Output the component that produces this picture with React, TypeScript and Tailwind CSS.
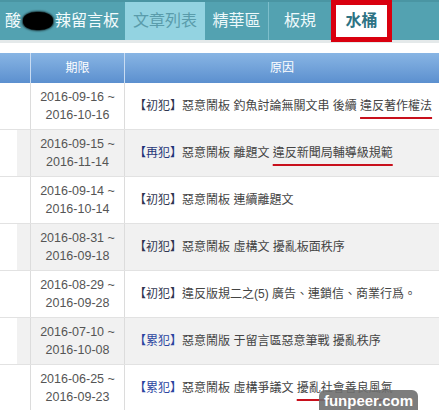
import React from "react";

type Row = {
  from: string;
  to: string;
  tag: "初犯" | "再犯" | "累犯";
  text: string;
  mark?: string;
  gray?: boolean;
};

const rows: Row[] = [
  { from: "2016-09-16", to: "2016-10-16", tag: "初犯", text: "惡意鬧板 釣魚討論無關文串 後續 ", mark: "違反著作權法" },
  { from: "2016-09-15", to: "2016-11-14", tag: "再犯", text: "惡意鬧板 離題文 ", mark: "違反新聞局輔導級規範", gray: true },
  { from: "2016-09-14", to: "2016-10-14", tag: "初犯", text: "惡意鬧板 連續離題文" },
  { from: "2016-08-31", to: "2016-09-18", tag: "初犯", text: "惡意鬧板 虛構文 擾亂板面秩序", gray: true },
  { from: "2016-08-29", to: "2016-09-28", tag: "初犯", text: "違反版規二之(5) 廣告、連鎖信、商業行爲。" },
  { from: "2016-07-10", to: "2016-10-08", tag: "累犯", text: "惡意鬧版 于留言區惡意筆戰 擾亂秩序", gray: true },
  { from: "2016-06-25", to: "2016-09-23", tag: "累犯", text: "惡意鬧板 虛構爭議文 ", mark: "擾亂社會善良風氣" },
];

const tagColor: Record<string, string> = {
  初犯: "text-[#2f3550]",
  再犯: "text-[#1f3478]",
  累犯: "text-[#2b45a0]",
};

export default function App() {
  return (
    <div
      className="relative w-[439px] h-[410px] overflow-hidden bg-white"
      style={{ fontFamily: '"Liberation Sans", "Noto Sans CJK TC", sans-serif' }}
    >
      {/* nav */}
      <div className="flex h-[40px] bg-[#53a2b1] border-t-[2px] border-[#4a95a3] items-start text-[16px] leading-none">
        <div className="h-[38px] w-[125px] flex items-center pl-[5px] text-[#f2fbfc]">
          <span>酸</span>
          <span className="inline-block w-[30px] h-[18px] mx-[2px] bg-black rounded-[45%] shadow-[0_0_2px_1px_rgba(0,0,0,0.7)]" />
          <span>辣留言板</span>
        </div>
        <div className="h-[38px] w-[80px] flex items-center justify-center bg-[#93d3e1] text-[#5a9cab]">
          文章列表
        </div>
        <div className="h-[38px] w-[64px] flex items-center justify-center text-[#eef9fb] border-r border-[#7dbecb]">
          精華區
        </div>
        <div className="h-[38px] w-[62px] flex items-center justify-center text-[#eef9fb]">
          板規
        </div>
        <div className="h-[42px] -mt-[2px] w-[61px] flex items-center justify-center bg-white border-[5px] border-[#d9000f] text-[#2e7384] font-bold relative z-10">
          水桶
        </div>
      </div>

      <div className="h-[3px] bg-[#e4e9ea]" />
      <div className="h-[10px] bg-white" />

      {/* header */}
      <div className="grid grid-cols-[31px_94px_1fr] h-[30px] bg-[linear-gradient(#88b5e4,#5c90cf)] text-white text-[12px] leading-none">
        <div className="border-r border-[#c9dcf2]" />
        <div className="flex items-center justify-center border-r border-[#c9dcf2]">期限</div>
        <div className="flex items-center justify-center">原因</div>
      </div>

      {/* body */}
      <div className="flex flex-col">
        {rows.map((r, i) => (
          <div
            key={i}
            className="grid grid-cols-[31px_94px_1fr] h-[47px] border-b border-[#e2e2e2]"
          >
            <div className="flex border-r border-[#dcdcdc]">
              <div className="w-[17px]" />
              <div className={`flex-1 ${r.gray ? "bg-[#f1f1f1]" : ""}`} />
            </div>
            <div
              className={`flex flex-col items-center justify-center border-r border-[#dcdcdc] text-[12.5px] leading-[18px] text-[#555] ${r.gray ? "bg-[#f1f1f1]" : ""}`}
            >
              <span>{r.from} ~</span>
              <span>{r.to}</span>
            </div>
            <div
              className={`flex items-center pl-[9px] text-[12px] leading-[16px] text-[#444] whitespace-nowrap ${r.gray ? "bg-[#f1f1f1]" : ""}`}
            >
              <span className={tagColor[r.tag]}>【{r.tag}】</span>
              <span className="whitespace-pre">{r.text}</span>
              {r.mark && (
                <span className="underline decoration-[#c8101c] decoration-2 underline-offset-[7px]">
                  {r.mark}
                </span>
              )}
            </div>
          </div>
        ))}
      </div>

      {/* watermark */}
      <div className="absolute left-[319px] top-[390px] w-[99px] h-[26px] rounded-t-[6px] bg-[#6f6f6f]/90 flex items-start justify-center pt-[2px]">
        <span className="text-white font-bold text-[15px] leading-[17px]">funpeer.com</span>
      </div>
    </div>
  );
}
